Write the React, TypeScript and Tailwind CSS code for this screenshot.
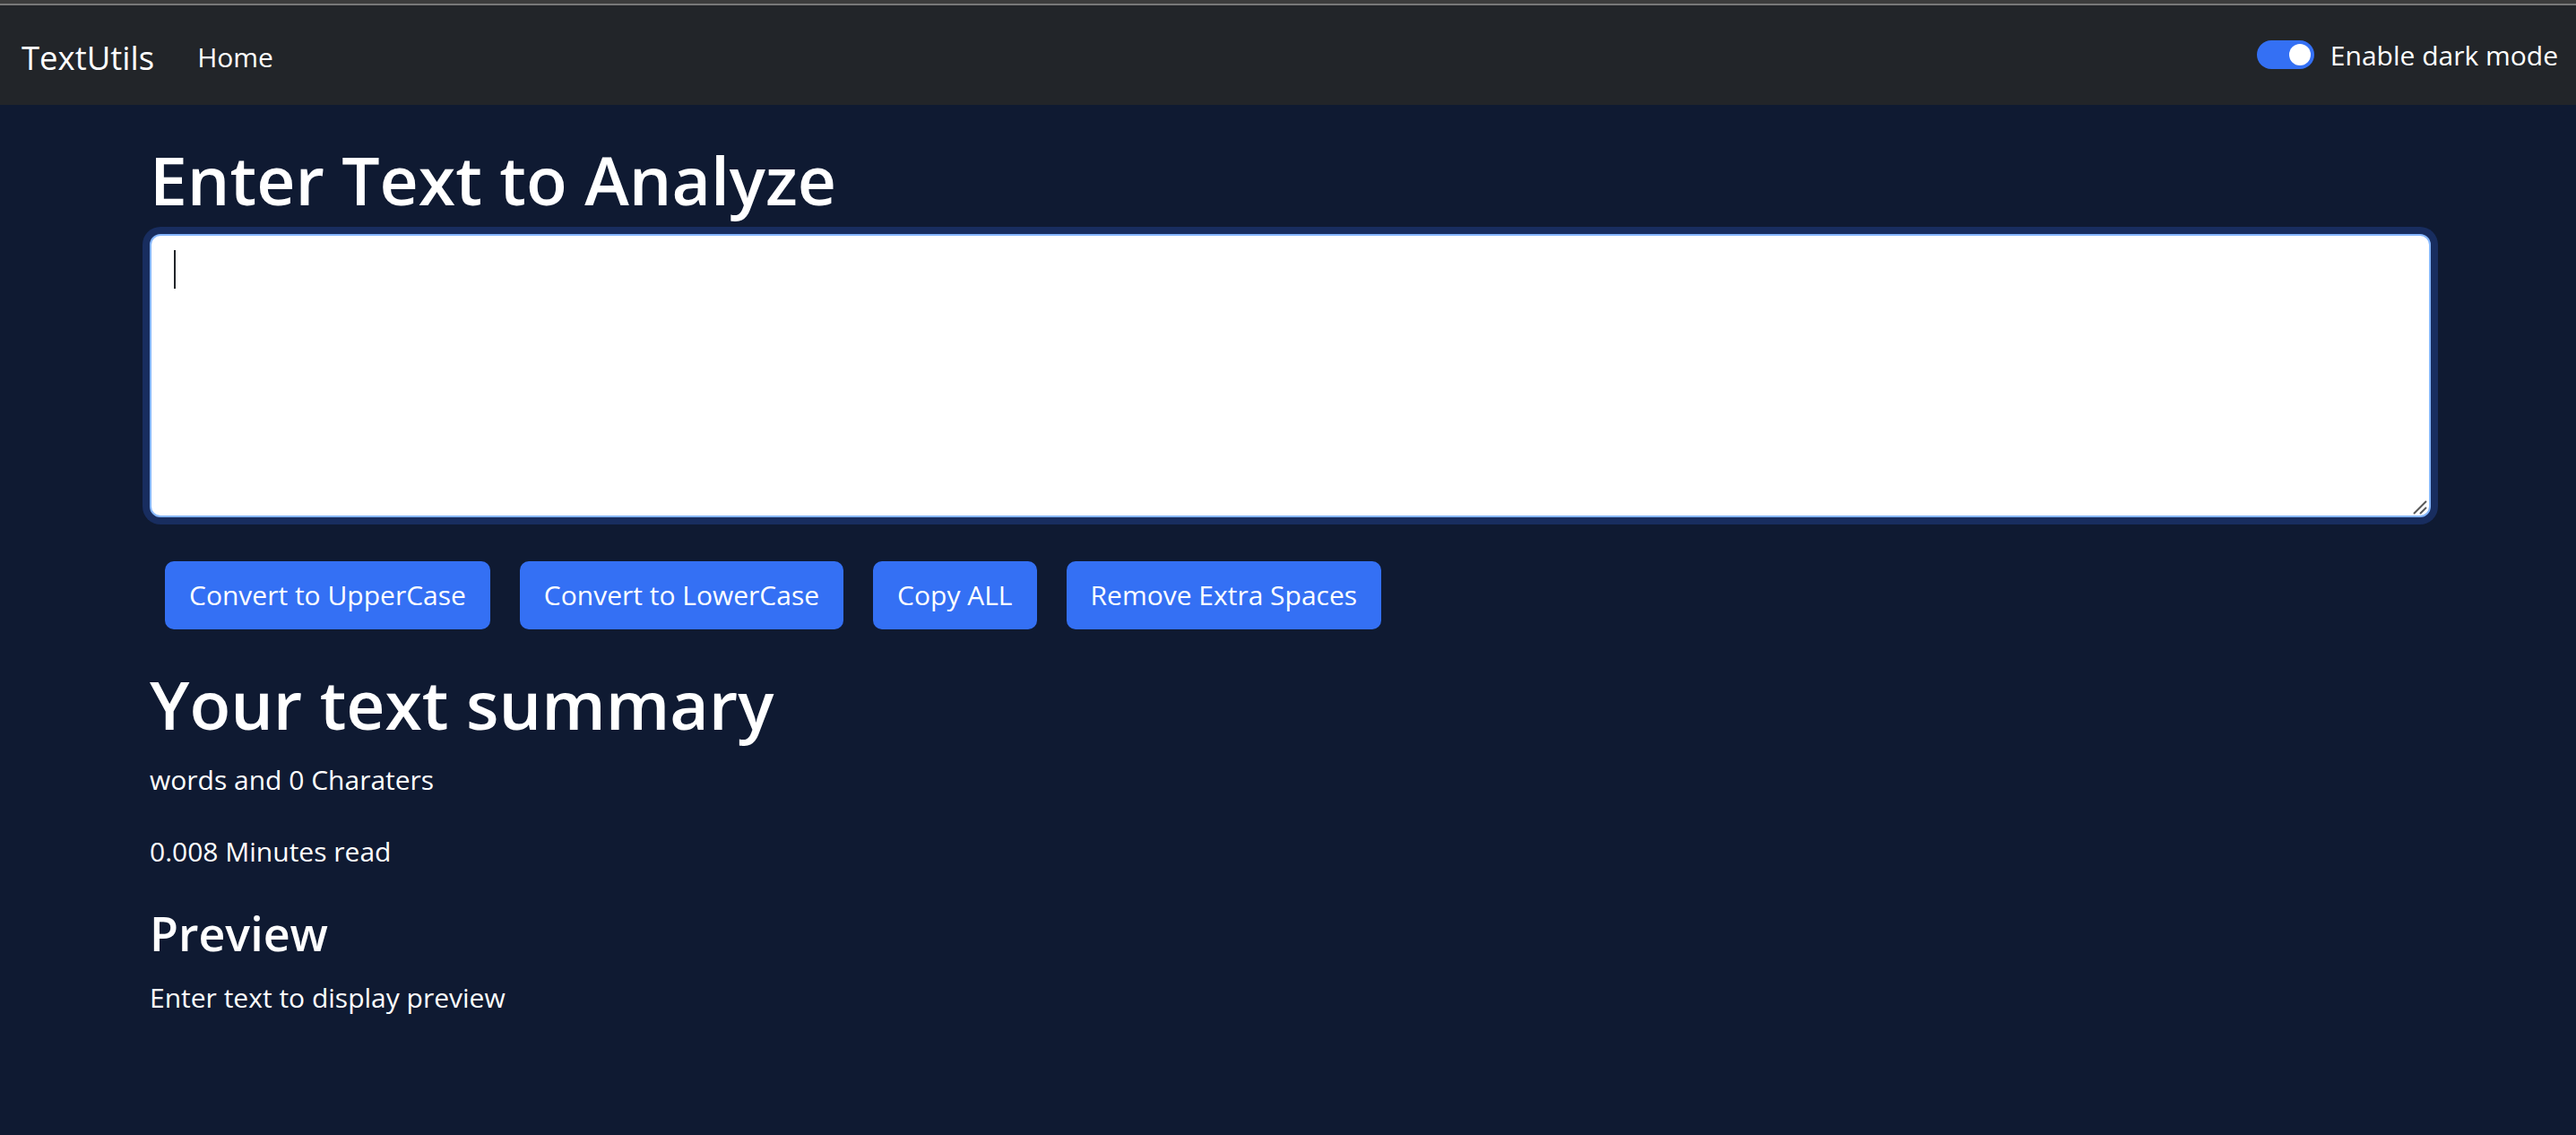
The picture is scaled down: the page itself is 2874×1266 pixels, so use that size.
import React from 'react';

const buttons = ['Convert to UpperCase', 'Convert to LowerCase', 'Copy ALL', 'Remove Extra Spaces'];

const App: React.FC = () => {
  return (
    <div className="min-h-screen bg-[#0f1a32] text-white font-['Open_Sans','Noto_Sans',sans-serif]">
      {/* browser chrome strip */}
      <div className="h-[4px] bg-[#3c3c3c]" />
      <div className="h-[2px] bg-[#787878]" />

      {/* Navbar */}
      <nav className="h-[111px] bg-[#222529] flex items-center pl-[24px] pr-[20px]">
        <span className="text-[36.5px] leading-[60px] mr-[32px] pt-[4px]">TextUtils</span>
        <a href="#" className="text-[30px] leading-[48px] px-[16px] pt-[4px]">
          Home
        </a>
        <div className="ml-auto flex items-center">
          <div className="relative w-[64px] h-[32px] rounded-full bg-[#3470f4] -mt-[2px]">
            <span className="absolute right-[4px] top-[4px] w-[24px] h-[24px] rounded-full bg-white" />
          </div>
          <label className="ml-[18px] text-[30px] leading-[48px]">Enable dark mode</label>
        </div>
      </nav>

      <main className="pl-[167px] pr-[162px]">
        <div className="pt-[32px]">
          <h1 className="text-[75px] leading-[96px] font-semibold pt-[3px] mb-[13px]">Enter Text to Analyze</h1>
          <div className="relative">
            <textarea
              className="block w-full h-[316px] bg-white text-[#212529] text-[30px] leading-[48px] px-[24px] py-[12px] border-2 border-[#86b7fe] rounded-[12px] shadow-[0_0_0_8px_#182d5f] outline-none caret-transparent resize-none"
              defaultValue=""
            />
            {/* caret */}
            <span className="absolute left-[27px] top-[18px] w-[2px] h-[43px] bg-[#212529]" />
            {/* resize grip */}
            <svg className="absolute right-[4px] bottom-[3px] w-[16px] h-[16px]" viewBox="0 0 16 16" aria-hidden="true">
              <path d="M1 15 L15 1 M8 15 L15 8" stroke="#5a5a5a" strokeWidth="2" fill="none" />
            </svg>
          </div>
          <div className="flex gap-[33px] pl-[17px] mt-[49px]">
            {buttons.map(label => (
              <button
                key={label}
                className="h-[76px] px-[27px] rounded-[10px] bg-[#3470f4] text-white text-[30px] leading-[48px]"
              >
                {label}
              </button>
            ))}
          </div>
        </div>

        <div className="mt-[32px]">
          <h1 className="text-[75px] leading-[96px] font-semibold pt-[3px] mb-[13px]">Your text summary</h1>
          <p className="text-[30px] leading-[48px] mb-[32px]">words and 0 Charaters</p>
          <p className="text-[30px] leading-[48px] mb-[32px]">0.008 Minutes read</p>
          <h3 className="text-[52px] leading-[67px] font-semibold pt-[1px] mb-[15px]">Preview</h3>
          <p className="text-[30px] leading-[48px]">Enter text to display preview</p>
        </div>
      </main>
    </div>
  );
};

export default App;
